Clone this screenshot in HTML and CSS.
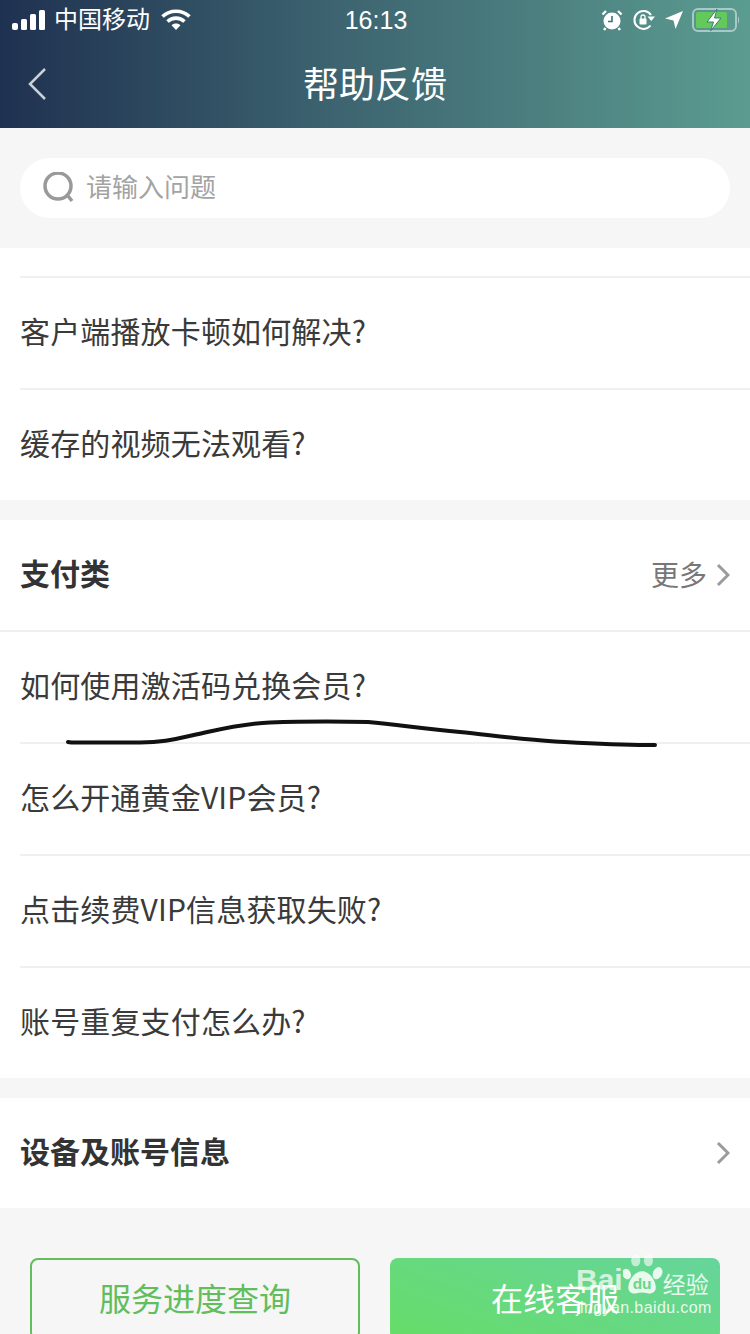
FILE: index.html
```html
<!DOCTYPE html>
<html lang="zh-CN">
<head>
<meta charset="utf-8">
<title>帮助反馈</title>
<link rel="stylesheet" href="styles.css">
</head>
<body>
<div class="page">
  <header class="top">
    <div class="status">
      <div class="status-left">
        <svg class="signal" width="34" height="20" viewBox="0 0 34 20"><rect x="0" y="13" width="6" height="7" rx="2"/><rect x="9" y="9" width="6" height="11" rx="1.5"/><rect x="18" y="4" width="6" height="16" rx="1.5"/><rect x="27" y="0" width="6" height="20" rx="1.5"/></svg>
        <span class="carrier">中国移动</span>
        <svg class="wifi" width="30" height="22" viewBox="0 0 30 22"><path d="M1.5 7.5C9 0.5 21 0.5 28.500 7.500" /><path d="M6.500 12.500C11.500 8 18.500 8 23.500 12.500"/><path class="wifi-dot" d="M10.500 16.200C13 14 17 14 19.500 16.200L15 21Z"/></svg>
      </div>
      <span class="time">16:13</span>
      <div class="status-right">
        <svg width="22" height="22" viewBox="0 0 22 22"><circle cx="11" cy="12" r="8.500" fill="#fff"/><path d="M11 7V12.500H7" fill="none" stroke="#3f6f78" stroke-width="1.600"/><path d="M1.500 5.500L5 2M20.500 5.500L17 2M4.500 19L3 21M17.500 19L19 21" stroke="#fff" stroke-width="2.400" fill="none"/></svg>
        <svg width="24" height="22" viewBox="0 0 24 22"><path d="M18.500 16.500A9 9 0 1 1 19 6" fill="none" stroke="#fff" stroke-width="2"/><path d="M15.500 7.500H23L19.300 12Z" fill="#fff"/><rect x="7.500" y="9.500" width="7" height="6" rx="1" fill="#fff"/><path d="M9 10V8a2 2 0 0 1 4 0V10" fill="none" stroke="#fff" stroke-width="1.300"/></svg>
        <svg width="18" height="18" viewBox="0 0 18 18"><path d="M18 0L10.500 18L8.500 9.500L0 7.500Z" fill="#fff"/></svg>
        <svg width="48" height="24" viewBox="0 0 48 24"><rect x="1" y="1" width="43" height="22" rx="5" fill="none" stroke="#a9c9c6" stroke-width="2"/><rect x="4" y="4" width="31" height="16" rx="1.500" fill="#62c95a"/><path d="M46 8.500C47.500 9.500 47.500 14.500 46 15.500Z" fill="#a9c9c6"/><path d="M25 1L15 14H21.500L18.500 23L29 10H22.500Z" fill="#fff" stroke="#3f7a78" stroke-width="1"/></svg>
      </div>
    </div>
    <nav class="nav">
      <svg class="back" width="20" height="34" viewBox="0 0 20 34"><path d="M18 2L3 17L18 32"/></svg>
      <h1 class="title">帮助反馈</h1>
    </nav>
  </header>

  <div class="search-band">
    <div class="search">
      <svg class="search-icon" width="32" height="32" viewBox="0 0 32 32"><circle cx="15" cy="14" r="13"/><path d="M25 24L29 29"/></svg>
      <span class="placeholder">请输入问题</span>
    </div>
  </div>

  <section class="card card-first">
    <div class="row">客户端播放卡顿如何解决?</div>
    <div class="row">缓存的视频无法观看?</div>
  </section>

  <section class="card">
    <div class="head">
      <span class="head-title">支付类</span>
      <span class="more">更多</span>
      <svg class="chev" width="14" height="24" viewBox="0 0 14 24"><path d="M2 2L12 12L2 22"/></svg>
    </div>
    <div class="row row-flush">如何使用激活码兑换会员?</div>
    <div class="row">怎么开通黄金VIP会员?</div>
    <div class="row">点击续费VIP信息获取失败?</div>
    <div class="row">账号重复支付怎么办?</div>
  </section>

  <section class="card">
    <div class="head">
      <span class="head-title">设备及账号信息</span>
      <svg class="chev" width="14" height="24" viewBox="0 0 14 24"><path d="M2 2L12 12L2 22"/></svg>
    </div>
  </section>

  <footer class="actions">
    <button class="btn btn-outline">服务进度查询</button>
    <button class="btn btn-fill">在线客服</button>
  </footer>

  <svg class="scribble" width="750" height="60" viewBox="0 0 750 60"><path d="M68 37C72 38 76 37.500 90 37.500L140 37.500C165 37.500 175 34 205 27.500C235 21 255 18 270 17.500C300 16.500 340 16.500 368 17C400 20 425 24 460 27C490 30 520 34.500 555 36.500C590 38.500 620 40.500 655 40"/></svg>

  <div class="mark">
    <div class="mark-top">
      <span class="mark-bai">Bai</span>
      <svg class="paw" width="40" height="46" viewBox="0 0 44 46"><ellipse cx="4" cy="22" rx="4.500" ry="6" transform="rotate(-25 4 22)" class="paw-fill"/><ellipse cx="14" cy="7" rx="5" ry="6.500" class="paw-ghost"/><ellipse cx="28" cy="7" rx="5" ry="6.500" class="paw-ghost"/><ellipse cx="38" cy="21" rx="5" ry="7" transform="rotate(25 38 21)" class="paw-fill"/><path class="paw-fill" d="M21 19C29 19 35 28 36 35C37 42 31 44 27 43C23 42 19 42 15 43C10 44 5 42 6 35C7 28 13 19 21 19Z"/><text x="21" y="38" class="paw-du">du</text></svg>
      <span class="mark-jy">经验</span>
    </div>
    <div class="mark-url">jingyan.baidu.com</div>
  </div>
</div>
</body>
</html>
```
FILE: styles.css
```css
* { box-sizing: border-box; }
html, body { margin: 0; padding: 0; }
body { background: #f6f6f7; font-family: "Noto Sans CJK SC", "Liberation Sans", sans-serif; color: #333; }
.page { position: relative; width: 750px; height: 1334px; overflow: hidden; background: #f6f6f7; }

.top { height: 128px; background: linear-gradient(90deg, #1f3150 0%, #3d6470 45%, #5b9c90 100%); color: #fff; }
.status { height: 40px; padding: 0 10px 0 12px; display: grid; grid-template-columns: 1fr auto 1fr; align-items: center; }
.status-left { display: flex; align-items: center; }
.signal { fill: #fff; }
.carrier { margin-left: 8px; font-size: 24px; line-height: 36px; padding-bottom: 4px; }
.wifi { margin-left: 11px; }
.wifi path { fill: none; stroke: #fff; stroke-width: 3.600; }
.wifi .wifi-dot { fill: #fff; stroke: none; }
.time { font-family: "Liberation Sans", sans-serif; font-size: 25px; line-height: 40px; }
.status-right { display: flex; align-items: center; justify-content: flex-end; gap: 9px; }

.nav { height: 88px; padding: 0 0 0 27px; position: relative; display: flex; align-items: center; }
.back { fill: none; stroke: #c9d2d6; stroke-width: 2.500; }
.title { position: absolute; left: 0; right: 0; top: 0; margin: 0; font-size: 36px; font-weight: 400; line-height: 84px; text-align: center; }

.search-band { height: 120px; padding: 30px 20px; }
.search { height: 60px; border-radius: 30px; background: #fff; display: flex; align-items: center; padding-left: 23px; }
.search-icon { fill: none; stroke: #999; stroke-width: 3.500; }
.placeholder { margin-left: 11px; font-size: 26px; line-height: 56px; padding-bottom: 4px; color: #a3a3a3; }

.card { background: #fff; margin-bottom: 20px; }
.card-first { padding-top: 28px; }
.row { height: 112px; margin-left: 20px; border-top: 2px solid #f0f0f0; font-size: 30px; line-height: 104px; letter-spacing: .15px; color: #3a3a3a; }
.row-flush { margin-left: 0; padding-left: 20px; }
.head { height: 110px; padding: 0 20px; display: flex; align-items: center; }
.head-title { flex: 1; font-size: 30px; font-weight: 700; line-height: 104px; padding-bottom: 6px; color: #333; }
.more { font-size: 28px; line-height: 104px; padding-bottom: 3px; color: #777; margin-right: 9px; }
.chev { fill: none; stroke: #9b9b9b; stroke-width: 3; }

.actions { margin-top: 50px; padding: 0 30px; display: flex; gap: 30px; }
.btn { flex: 0 0 330px; height: 82px; padding: 0 0 5px; border-radius: 8px; font: inherit; font-size: 32px; }
.btn-outline { border: 2px solid #62bd5c; background: transparent; color: #62bd5c; }
.btn-fill { border: 0; background: linear-gradient(20deg, #66dd68, #66d59c); color: #fff; }

.scribble { position: absolute; left: 0; top: 705px; fill: none; stroke: #111; stroke-width: 4; stroke-linecap: round; }

.mark { position: absolute; left: 576px; top: 1252px; width: 136px; color: #fff; }
.mark-top { display: flex; align-items: flex-end; height: 46px; }
.mark-bai { font-family: "Liberation Sans", sans-serif; font-size: 30px; font-weight: 700; line-height: 36px; opacity: .7; }
.paw { flex: none; }
.paw-fill { fill: #fff; opacity: .85; }
.paw-ghost { fill: #fff; opacity: .6; }
.paw-du { font-family: "Liberation Sans", sans-serif; font-size: 17px; font-weight: 700; text-anchor: middle; fill: #66d78a; }
.mark-jy { font-size: 23px; line-height: 30px; opacity: .85; white-space: nowrap; }
.mark-url { font-family: "Liberation Sans", sans-serif; font-size: 16px; line-height: 18px; letter-spacing: .4px; opacity: .85; margin-top: 1px; white-space: nowrap; text-align: right; padding-right: 3px; }
```
